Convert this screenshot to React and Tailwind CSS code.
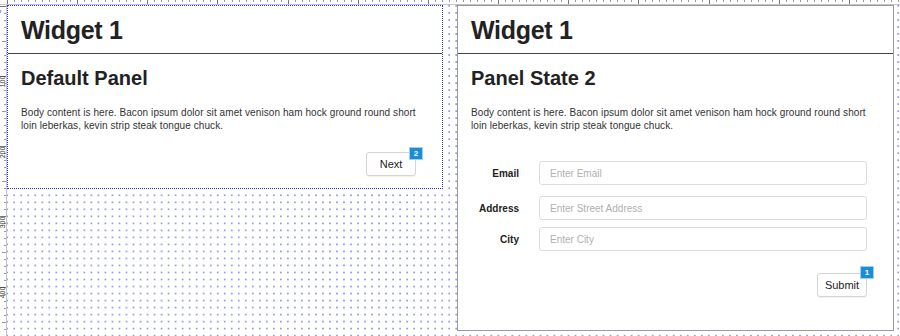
const font = { fontFamily: '"Liberation Sans", Arial, sans-serif' };

const topLabels = ["0", "100", "200", "300", "400", "500", "600", "700", "800", "900", "1000", "1100", "1200"];
const sideLabels = ["0", "100", "200", "300", "400"];

const TopRuler = () => {
  return (
    <div className="relative h-[5px] w-full shrink-0 overflow-hidden border-b border-[#c4c4c4] bg-white">
      <div className="flex h-[3px] pl-[7px]">
        {Array.from({ length: 128 }).map((_, i) => (
          <div
            key={i}
            className={
              i % 10 === 0
                ? "h-[4px] w-[7.03px] shrink-0 border-l border-[#777]"
                : "h-[2px] w-[7.03px] shrink-0 border-l border-[#999]"
            }
          />
        ))}
      </div>
      <div className="absolute left-[11px] top-0 flex">
        {topLabels.map((l) => (
          <div key={l} className="-mt-[6px] w-[70.3px] shrink-0 text-[8px] leading-[8px] text-[#333]">
            {l}
          </div>
        ))}
      </div>
    </div>
  );
};

const SideRuler = () => {
  return (
    <div className="relative w-[7px] shrink-0 overflow-hidden border-r border-[#c4c4c4] bg-white">
      <div className="flex flex-col items-end pt-[1px]">
        {Array.from({ length: 47 }).map((_, i) => (
          <div
            key={i}
            className={
              i % 10 === 0
                ? "h-[7.03px] w-[6px] shrink-0 border-t border-[#777]"
                : i % 5 === 0
                ? "h-[7.03px] w-[4px] shrink-0 border-t border-[#999]"
                : "h-[7.03px] w-[2px] shrink-0 border-t border-[#999]"
            }
          />
        ))}
      </div>
      <div className="absolute -left-[3px] -top-[3px] flex flex-col">
        {sideLabels.map((l) => (
          <div key={l} className="flex h-[70.3px] items-start">
            <span className="mt-[6px] block -rotate-90 text-[7px] leading-[7px] text-[#333]">{l}</span>
          </div>
        ))}
      </div>
    </div>
  );
};

const Badge = ({ n, top }) => (
  <span
    className={`absolute -right-[7px] ${top} flex h-[11px] w-[12px] items-center justify-center bg-[#1b8dd6] text-[8px] font-bold leading-none text-white ring-1 ring-[#9fd0ef]`}
  >
    {n}
  </span>
);

const Button = ({ label, badge, top }) => (
  <button className="relative h-[24px] w-[50px] rounded-[3px] border border-[#d4d4d4] bg-white text-[11px] text-[#222] shadow-[0_1px_1px_rgba(0,0,0,0.06)]">
    {label}
    <Badge n={badge} top={top} />
  </button>
);

const Header = () => (
  <div className="h-[48px] shrink-0 border-b border-[#444] px-[13px] pt-[12px]">
    <h1 className="text-[25px] font-bold leading-[25px] tracking-[-0.3px] text-[#222]">Widget 1</h1>
  </div>
);

const Body = ({ title }) => (
  <>
    <h2 className="text-[20px] font-bold leading-[20px] text-[#222]">{title}</h2>
    <p className="mt-[18px] pr-[4px] text-[10px] leading-[13px] tracking-[0.08px] text-[#333]">
      Body content is here. Bacon ipsum dolor sit amet venison ham hock ground round short loin leberkas, kevin strip
      steak tongue chuck.
    </p>
  </>
);

const Field = ({ label, placeholder }) => (
  <>
    <label className="text-right text-[10px] font-bold text-[#222]">{label}</label>
    <input
      placeholder={placeholder}
      className="h-[24px] w-full rounded-[3px] border border-[#dcdcdc] bg-white px-[10px] text-[10px] placeholder:text-[#b0b0b0]"
    />
  </>
);

export default function App() {
  return (
    <div
      style={font}
      className="flex h-[336px] w-[900px] flex-col overflow-hidden bg-white bg-[image:radial-gradient(circle,#7a7af2_0.55px,transparent_0.85px)] bg-[size:7.03px_7.03px] bg-[position:-3.3px_2.4px]"
    >
      <TopRuler />
      <div className="flex min-h-0 flex-1">
        <SideRuler />
        <div className="flex items-start gap-[14px]">
          <div className="flex h-[184px] w-[436px] flex-col border border-dotted border-[#3030e8] bg-white">
            <Header />
            <div className="px-[13px] pt-[14px]">
              <Body title="Default Panel" />
              <div className="mt-[20px] flex justify-end pr-[13px]">
                <Button label="Next" badge="2" top="-top-[5px]" />
              </div>
            </div>
          </div>

          <div className="flex h-[326px] w-[437px] flex-col border border-[#9a9a9a] bg-white">
            <Header />
            <div className="px-[13px] pt-[14px]">
              <Body title="Panel State 2" />
              <div className="mt-[29px] grid grid-cols-[48px_1fr] items-center gap-x-[20px] pr-[13px]">
                <Field label="Email" placeholder="Enter Email" />
                <div className="col-span-2 h-[11px]" />
                <Field label="Address" placeholder="Enter Street Address" />
                <div className="col-span-2 h-[7px]" />
                <Field label="City" placeholder="Enter City" />
              </div>
              <div className="mt-[22px] flex justify-end pr-[13px]">
                <Button label="Submit" badge="1" top="-top-[7px]" />
              </div>
            </div>
          </div>
        </div>
      </div>
    </div>
  );
}
